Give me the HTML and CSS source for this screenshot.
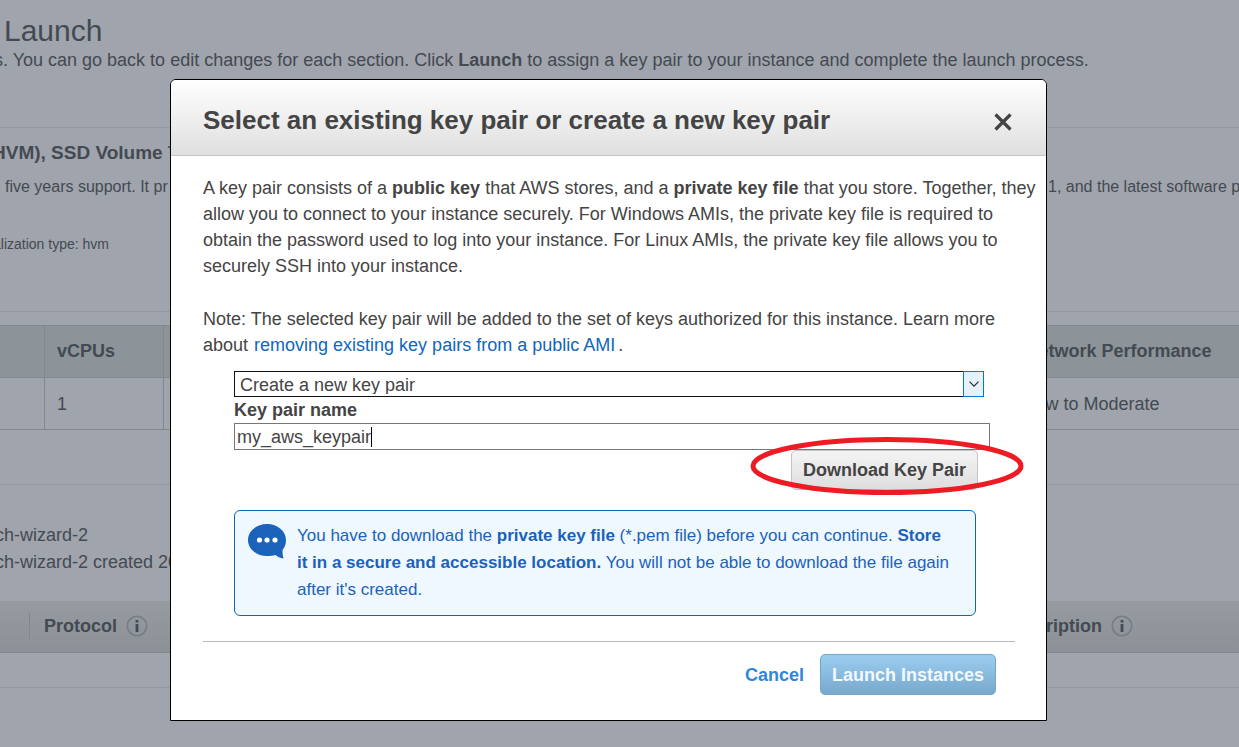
FILE: index.html
```html
<!DOCTYPE html>
<html lang="en">
<head>
<meta charset="utf-8">
<title>Review Instance Launch</title>
<link rel="stylesheet" href="styles.css">
</head>
<body>
<main class="page">
  <header class="intro">
    <h1 class="intro-title">Launch</h1>
    <p class="intro-text">s. You can go back to edit changes for each section. Click <b>Launch</b> to assign a key pair to your instance and complete the launch process.</p>
  </header>
  <section class="ami">
    <h2 class="ami-title">HVM), SSD Volume T</h2>
    <div class="ami-text"><span>five years support. It pr</span><span>1, and the latest software p</span></div>
    <p class="ami-meta">alization type: hvm</p>
  </section>
  <section class="types">
    <table class="types-table">
      <colgroup><col class="col-first"><col class="col-cpu"><col><col class="col-net"></colgroup>
      <thead><tr><th></th><th>vCPUs</th><th></th><th>Network Performance</th></tr></thead>
      <tbody><tr><td></td><td>1</td><td></td><td>Low to Moderate</td></tr></tbody>
    </table>
  </section>
  <section class="group">
    <p>ch-wizard-2</p>
    <p>ch-wizard-2 created 20</p>
  </section>
  <section class="rules">
    <div class="rules-head">
      <div class="rules-cell">Protocol
        <svg class="info" viewBox="0 0 22 22" aria-hidden="true"><circle cx="11" cy="11" r="9.7" fill="none" stroke="#777d84" stroke-width="1.6"/><path d="M11 5v2.6M11 9v8" stroke="#454b54" stroke-width="2.8"/></svg>
      </div>
      <div class="rules-cell">Description
        <svg class="info" viewBox="0 0 22 22" aria-hidden="true"><circle cx="11" cy="11" r="9.7" fill="none" stroke="#777d84" stroke-width="1.6"/><path d="M11 5v2.6M11 9v8" stroke="#454b54" stroke-width="2.8"/></svg>
      </div>
    </div>
    <div class="rules-row"></div>
  </section>
</main>

<div class="overlay">
  <div class="modal" role="dialog" aria-labelledby="modal-title">
    <div class="modal-head">
      <h2 class="modal-title" id="modal-title">Select an existing key pair or create a new key pair</h2>
      <button class="close" type="button" aria-label="Close">
        <svg viewBox="0 0 20 20" aria-hidden="true"><path d="M2.5 2.5l15 15M17.5 2.5l-15 15" stroke="#444" stroke-width="3.2"/></svg>
      </button>
    </div>
    <div class="modal-body">
      <p class="para">A key pair consists of a <b>public key</b> that AWS stores, and a <b>private key file</b> that you store. Together, they<br>allow you to connect to your instance securely. For Windows AMIs, the private key file is required to<br>obtain the password used to log into your instance. For Linux AMIs, the private key file allows you to<br>securely SSH into your instance.</p>
      <p class="para">Note: The selected key pair will be added to the set of keys authorized for this instance. Learn more<br>about <a class="link" href="#">removing existing key pairs from a public AMI</a>.</p>
      <form class="form">
        <div class="select-wrap">
          <select class="select" aria-label="Key pair option"><option>Create a new key pair</option></select>
          <span class="select-arrow"><svg viewBox="0 0 10 6" aria-hidden="true"><path d="M.5 .7L5 5.2L9.500 .7" fill="none" stroke="#222" stroke-width="1.1"/></svg></span>
        </div>
        <label class="label" for="name">Key pair name</label>
        <div class="field">
          <input class="input" id="name" type="text" value="my_aws_keypair">
          <span class="caret-line" aria-hidden="true"></span>
        </div>
        <div class="download-row">
          <div class="download-wrap">
            <button class="download" type="button">Download Key Pair</button>
            <svg class="ring" viewBox="0 0 274 60" aria-hidden="true"><ellipse cx="137" cy="30" rx="134" ry="26.500" fill="none" stroke="#ed1c24" stroke-width="5"/></svg>
          </div>
        </div>
        <div class="notice">
          <svg class="bubble" viewBox="0 0 38 35" aria-hidden="true"><path d="M19 0C29.500 0 38 7 38 16c0 4.200-1.500 7.500-3.500 10 0 3.500.4 6 1 8.500-3.500-.5-6-1.600-8-3.600C25 31.700 22 32 19 32 8.500 32 0 25 0 16S8.500 0 19 0z" fill="#1a62ba"/><g fill="#fff"><circle cx="11.500" cy="16" r="2.600"/><circle cx="19" cy="16" r="2.600"/><circle cx="27" cy="16" r="2.600"/></g></svg>
          <p class="notice-text">You have to download the <b>private key file</b> (*.pem file) before you can continue. <b>Store<br>it in a secure and accessible location.</b> You will not be able to download the file again<br>after it's created.</p>
        </div>
      </form>
      <div class="actions">
        <button class="cancel" type="button">Cancel</button>
        <button class="launch" type="button">Launch Instances</button>
      </div>
    </div>
  </div>
</div>
</body>
</html>
```
FILE: styles.css
```css
* { box-sizing: border-box; }
body {
  margin: 0;
  min-height: 100vh;
  overflow: hidden;
  background: #a0a4ac;
  color: #444a52;
  font: 18px/26px "Liberation Sans", Arial, sans-serif;
}
h1, h2, p { margin: 0; }
button, input, select { font: inherit; color: inherit; }

.page { margin-left: -8px; overflow: hidden; white-space: nowrap; }
.intro { height: 128px; padding: 14px 0 0 2px; border-bottom: 1px solid #93979f; }
.intro-title { padding-left: 10px; font-size: 30px; line-height: 33px; font-weight: 400; }
.ami { height: 184px; padding-top: 12px; border-bottom: 1px solid #93979f; }
.ami-title { font-size: 19px; }
.ami-text {
  display: grid;
  grid-template-columns: 1043px 1fr;
  padding: 8px 0 0 13px;
  font-size: 16px;
}
.ami-meta { padding: 31px 0 0 1px; font-size: 14px; }
.types { height: 173px; padding-top: 13px; border-bottom: 1px solid #93979f; }
.types-table { width: 100%; table-layout: fixed; border-collapse: collapse; text-align: left; }
.col-first { width: 52px; }
.col-cpu { width: 119px; }
.col-net { width: 226px; }
.types-table th, .types-table td { height: 52px; padding: 0 12px; border: 1px solid #83888f; }
.types-table th { padding-bottom: 2px; background: #8c9499; border-left-color: #838a91; }
.types-table th:last-child, .types-table td:last-child { border-right: 0; }
.group { padding: 37px 0 25px 3px; line-height: 27px; }
.rules-head {
  display: flex;
  height: 52px;
  padding: 0 106px 2px 37px;
  justify-content: space-between;
  align-items: center;
  background: linear-gradient(#969ba1, #8c9197);
  border-bottom: 1px solid #80858c;
  font-weight: 700;
}
.rules-cell {
  display: flex;
  align-items: center;
  gap: 9px;
  height: 26px;
  padding-left: 14px;
  border-left: 1px solid #82878d;
}
.info { width: 22px; height: 22px; }
.rules-row { height: 35px; border-bottom: 1px solid #93979f; }

.overlay { position: absolute; inset: 0; padding: 79px 192px 26px 170px; }
.modal {
  overflow: hidden;
  background: #fff;
  color: #444;
  border: 1px solid #000;
  border-radius: 6px 6px 0 0;
  white-space: nowrap;
}
.modal-head {
  display: flex;
  align-items: center;
  justify-content: space-between;
  height: 76px;
  padding: 8px 33px 0 32px;
  background: linear-gradient(#fff, #dfdfdf);
  border-bottom: 1px solid #c4c4c4;
}
.modal-title { padding-bottom: 4px; font-size: 26px; line-height: 32px; }
.close { display: flex; padding: 0; border: 0; background: none; }
.close svg { width: 20px; height: 20px; }
.modal-body { padding: 19px 31px 25px 32px; }
.para { padding-bottom: 27px; }
.para + .para { padding-bottom: 13px; }
.link { margin: 0 3px 0 1px; color: #1166bb; text-decoration: none; }
.form { padding: 0 25px 25px 31px; }
.select-wrap { position: relative; margin-right: 6px; }
.select {
  display: block;
  width: 100%;
  height: 26px;
  padding: 0 5px 2px;
  appearance: none;
  background: #fff;
  border: 1px solid #111;
  border-radius: 0;
}
.select-arrow {
  position: absolute;
  inset: 0 0 0 auto;
  display: flex;
  align-items: center;
  justify-content: center;
  width: 21px;
  background: #e5f1fb;
  border: 1px solid #0078d7;
  pointer-events: none;
}
.select-arrow svg { width: 10px; height: 6px; }
.label { display: block; font-weight: 700; }
.field { position: relative; }
.input {
  display: block;
  width: 100%;
  height: 27px;
  padding: 2px 2px 0;
  background: #fff;
  border: 1px solid #777;
  border-radius: 0;
}
.caret-line { position: absolute; top: 4px; left: 137px; width: 1px; height: 20px; background: #000; }
.download-row { display: flex; justify-content: flex-end; padding: 0 12px 20px 0; }
.download-wrap { position: relative; }
.download {
  display: block;
  height: 40px;
  padding: 0 11px;
  background: linear-gradient(#f4f4f4, #dedede);
  border: 1px solid #c4c4c4;
  border-radius: 5px;
  font-weight: 700;
}
.ring { position: absolute; top: -14px; left: -41px; width: 274px; height: 60px; pointer-events: none; }
.notice {
  display: flex;
  gap: 11px;
  margin-right: 14px;
  padding: 11px 0 12px 13px;
  background: #f0f8ff;
  border: 1px solid #0f66b0;
  border-radius: 6px;
  color: #1a62ba;
  font-size: 17px;
  line-height: 27px;
}
.bubble { flex: none; width: 38px; height: 35px; margin-top: 2px; }
.actions {
  display: flex;
  justify-content: flex-end;
  gap: 16px;
  padding: 12px 19px 0 0;
  border-top: 1px solid #b8b8b8;
}
.cancel { padding: 0; border: 0; background: none; color: #2e86de; font-weight: 700; }
.launch {
  height: 41px;
  padding: 0 11px;
  background: linear-gradient(#9bcdf0, #78a9cd);
  border: 1px solid #74a7cb;
  border-radius: 5px;
  color: #f2f9ff;
  font-weight: 700;
}
```
